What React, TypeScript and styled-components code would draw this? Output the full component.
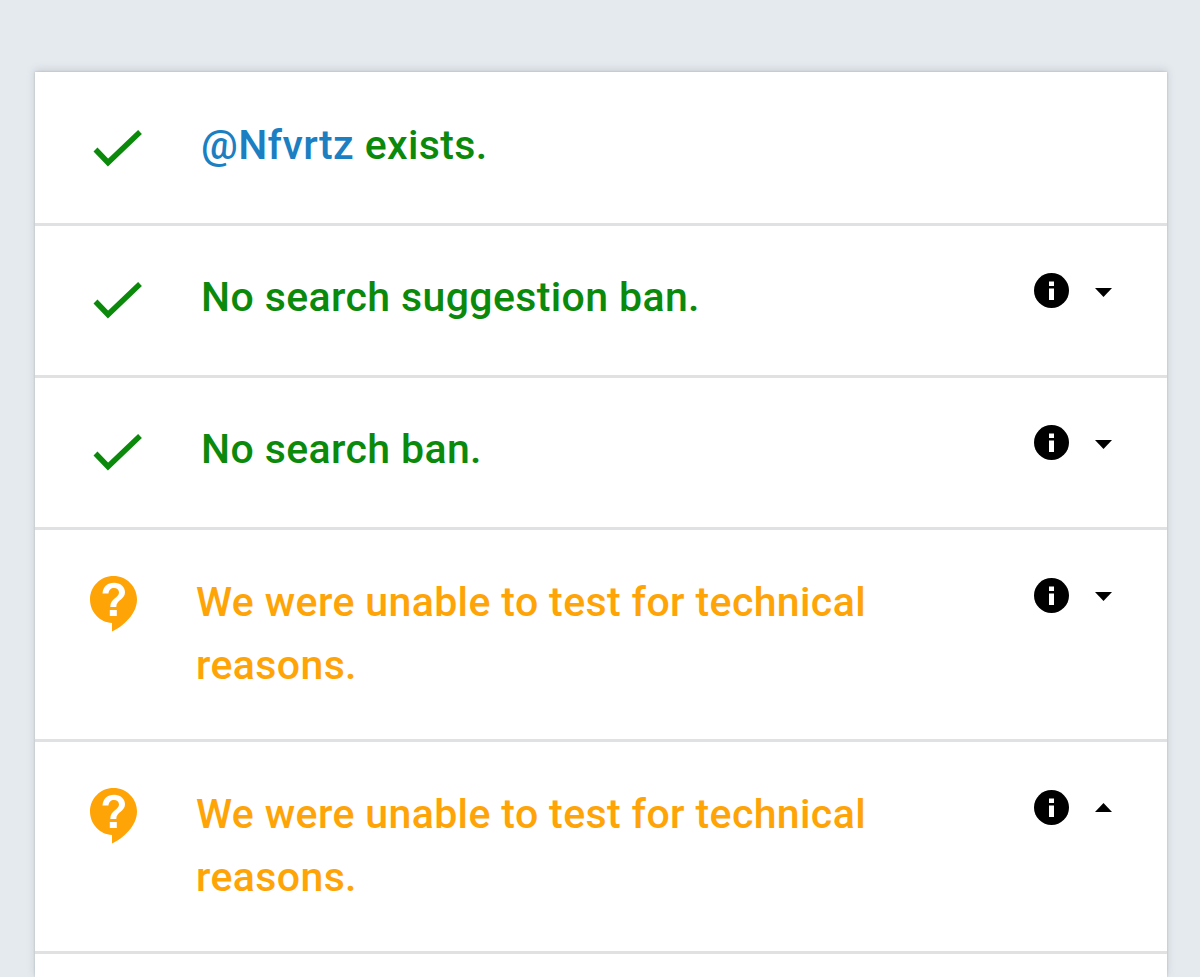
import React from "react";
import styled, { createGlobalStyle } from "styled-components";

const Global = createGlobalStyle`
  html, body { margin: 0; padding: 0; background: #e5eaef; }
  body { font-family: Roboto, "Liberation Sans", sans-serif; }
`;

const Page = styled.main`
  box-sizing: border-box;
  height: 977px;
  overflow: hidden;
  padding: 72px 33px 0 35px;
`;

const Card = styled.section`
  background: #fff;
  padding-top: 2px;
  box-shadow: 0 -2px 8px rgba(90, 100, 110, 0.22), 0 0 2px rgba(90, 100, 110, 0.3);
`;

const Row = styled.div<{ $indent: number }>`
  display: grid;
  grid-template-columns: ${(p) => p.$indent}px 1fr 35px 26px 17px;
  min-height: 149px;
  box-sizing: content-box;
  border-bottom: 3px solid #dfe1e3;
  padding-right: 55px;
`;

const Continuation = styled.div`
  height: 23px;
`;

const IconCell = styled.div<{ $top: number; $left: number }>`
  padding: ${(p) => p.$top}px 0 0 ${(p) => p.$left}px;
`;

const Message = styled.p<{ $color: string; $wide?: boolean }>`
  margin: 0;
  padding: ${(p) => (p.$wide ? "41px 0 42px" : "40px 0 46px")};
  max-width: 710px;
  font-weight: 500;
  font-size: 41px;
  letter-spacing: 0.38px;
  line-height: 63px;
  color: ${(p) => p.$color};
`;

const Handle = styled.span`
  color: #1b7fc2;
`;

const InfoCell = styled.div<{ $wide?: boolean }>`
  padding-top: ${(p) => (p.$wide ? 48 : 47)}px;
  grid-column: 3;
`;

const CaretCell = styled.div<{ $up?: boolean }>`
  padding-top: ${(p) => (p.$up ? 61 : 62)}px;
  grid-column: 5;
`;

const Svg = styled.svg`
  display: block;
`;

const Check = () => (
  <Svg width="52" height="42" viewBox="0 0 52 42">
    <path d="M4.500 22.500 L17 35.500 L49 5" fill="none" stroke="#0b890b" strokeWidth="5.500" />
  </Svg>
);

const Question = () => (
  <Svg width="50" height="58" viewBox="0 0 50 58">
    <path
      d="M24.500 1C11.500 1 1 11.500 1 24.500C1 37 11 47.500 23 48V56.500C34 51.500 48 39 48 24.500C48 11.500 37.500 1 24.500 1Z"
      fill="#ffa407"
    />
    <path
      d="M13.500 18.500C14 11.500 18.500 7.700 25 7.700C31.500 7.700 36 11.800 36 17.300C36 24.500 27.300 25 27.300 32H21.300C21.300 23 30 23 30 17.500C30 14.800 28 13 25 13C22 13 19.800 15 19.500 18.500Z"
      fill="#fff"
    />
    <rect x="20.800" y="35" width="7" height="6" fill="#fff" />
  </Svg>
);

const Info = () => (
  <Svg width="35" height="35" viewBox="0 0 35 35">
    <circle cx="17.500" cy="17.500" r="17.500" fill="#000" />
    <rect x="15" y="8.500" width="5" height="4.500" fill="#fff" />
    <rect x="15" y="15.500" width="5" height="11.500" fill="#fff" />
  </Svg>
);

const Caret = ({ up }: { up?: boolean }) => (
  <Svg width="17" height="9" viewBox="0 0 17 9">
    <path d={up ? "M0 9H17L8.500 0Z" : "M0 0H17L8.500 9Z"} fill="#000" />
  </Svg>
);

type Item = {
  kind: "ok" | "unknown";
  text: React.ReactNode;
  controls?: "down" | "up";
};

const GREEN = "#0b890b";
const ORANGE = "#ffa407";
const UNABLE = "We were unable to test for technical reasons.";

const items: Item[] = [
  { kind: "ok", text: <><Handle>@Nfvrtz</Handle> exists.</> },
  { kind: "ok", text: "No search suggestion ban.", controls: "down" },
  { kind: "ok", text: "No search ban.", controls: "down" },
  { kind: "unknown", text: UNABLE, controls: "down" },
  { kind: "unknown", text: UNABLE, controls: "up" },
];

export default function App() {
  return (
    <Page>
      <Global />
      <Card>
        {items.map((item, i) => {
          const ok = item.kind === "ok";
          return (
            <Row key={i} $indent={ok ? 166 : 161}>
              <IconCell $top={ok ? 53 : 45} $left={ok ? 56 : 54}>
                {ok ? <Check /> : <Question />}
              </IconCell>
              <Message $color={ok ? GREEN : ORANGE} $wide={!ok}>{item.text}</Message>
              {item.controls && (
                <>
                  <InfoCell $wide={!ok}><Info /></InfoCell>
                  <CaretCell $up={item.controls === "up"}><Caret up={item.controls === "up"} /></CaretCell>
                </>
              )}
            </Row>
          );
        })}
        <Continuation />
      </Card>
    </Page>
  );
}
